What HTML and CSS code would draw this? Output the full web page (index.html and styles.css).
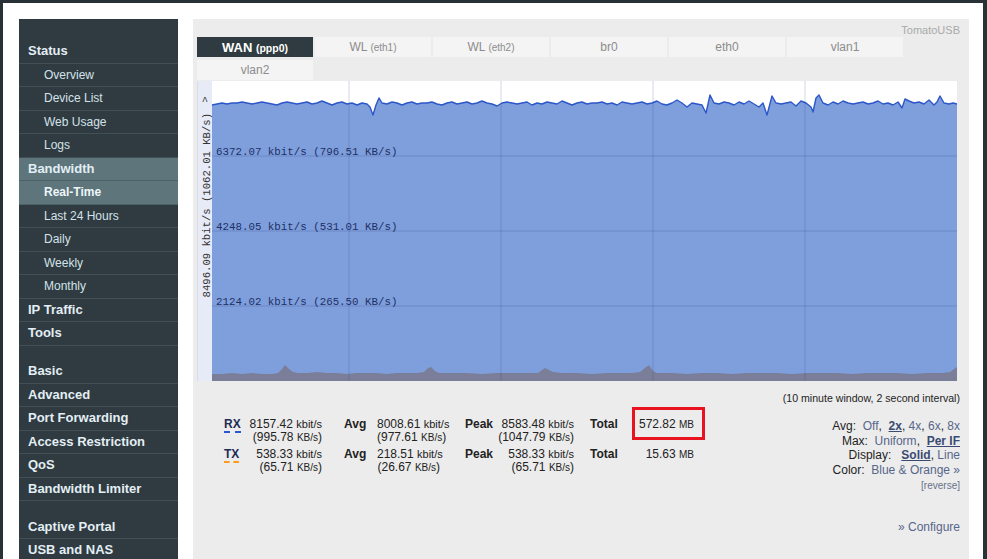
FILE: index.html
```html
<!DOCTYPE html>
<html>
<head>
<meta charset="utf-8">
<title>Bandwidth: Real-Time</title>
<link rel="stylesheet" href="styles.css">
</head>
<body>
<div class="frame">
  <nav class="sidebar">
    <div class="item head">Status</div>
    <div class="item sub">Overview</div>
    <div class="item sub">Device List</div>
    <div class="item sub">Web Usage</div>
    <div class="item sub">Logs</div>
    <div class="item head active">Bandwidth</div>
    <div class="item sub active">Real-Time</div>
    <div class="item sub">Last 24 Hours</div>
    <div class="item sub">Daily</div>
    <div class="item sub">Weekly</div>
    <div class="item sub">Monthly</div>
    <div class="item head">IP Traffic</div>
    <div class="item head">Tools</div>
    <div class="spacer"></div>
    <div class="item head">Basic</div>
    <div class="item head">Advanced</div>
    <div class="item head">Port Forwarding</div>
    <div class="item head">Access Restriction</div>
    <div class="item head">QoS</div>
    <div class="item head">Bandwidth Limiter</div>
    <div class="spacer"></div>
    <div class="item head">Captive Portal</div>
    <div class="item head">USB and NAS</div>
  </nav>
  <main class="panel">
    <div class="brand">TomatoUSB</div>
    <div class="tabs">
      <div class="tab on">WAN <small>(ppp0)</small></div>
      <div class="tab">WL <small>(eth1)</small></div>
      <div class="tab">WL <small>(eth2)</small></div>
      <div class="tab">br0</div>
      <div class="tab">eth0</div>
      <div class="tab">vlan1</div>
      <div class="tab">vlan2</div>
    </div>
    <div class="graph">
      <svg class="chart" width="760" height="300" viewBox="0 0 760 300">
        <rect x="0" y="0" width="15" height="300" fill="#e7ebf7"/>
        <rect x="0" y="0" width="1" height="300" fill="#d9dce4"/>
        <rect x="15" y="0" width="745" height="300" fill="#ffffff"/>
        <g transform="translate(15,0)">
          <path fill="#7f9fdc" d="M0,300 L0,24 5,23 10,22 15,23 20,22 25,22 30,21 35,22 40,23 45,22 50,21 55,22 60,23 65,24 70,22 75,21 80,22 85,23 90,22 95,21 100,23 105,22 110,20 115,22 120,24 125,22 130,21 135,23 140,22 145,24 150,22 155,23 158,26 161,34 164,24 167,17 170,22 175,23 180,21 185,22 190,24 195,22 200,21 205,23 210,22 215,22 220,21 225,23 230,24 235,22 240,21 245,23 250,22 255,21 260,23 265,22 270,20 275,22 280,23 285,25 290,22 295,21 300,22 305,23 310,22 315,21 320,24 325,22 330,23 335,21 340,22 345,23 350,20 355,22 360,24 365,22 370,21 375,23 380,22 385,22 390,21 395,23 400,22 405,24 410,21 415,22 420,23 425,22 430,21 435,23 440,22 445,20 450,23 455,24 460,22 465,19 470,22 475,26 480,22 485,23 490,24 494,32 498,14 502,22 507,23 512,21 517,22 522,24 527,21 532,23 537,20 542,23 547,26 551,22 555,34 560,15 564,22 569,23 574,22 579,21 584,25 589,20 594,22 599,26 601,31 604,17 607,14 611,22 616,24 621,21 626,23 631,20 636,22 641,23 646,22 651,21 656,23 661,22 666,20 671,23 676,22 681,24 686,21 690,27 693,18 697,20 702,22 707,21 712,23 717,19 722,24 725,21 728,15 732,22 737,23 741,22 745,23 L745,300 Z"/>
          <polyline fill="none" stroke="#2b57c9" stroke-width="1.4" stroke-linejoin="round" points="0,24 5,23 10,22 15,23 20,22 25,22 30,21 35,22 40,23 45,22 50,21 55,22 60,23 65,24 70,22 75,21 80,22 85,23 90,22 95,21 100,23 105,22 110,20 115,22 120,24 125,22 130,21 135,23 140,22 145,24 150,22 155,23 158,26 161,34 164,24 167,17 170,22 175,23 180,21 185,22 190,24 195,22 200,21 205,23 210,22 215,22 220,21 225,23 230,24 235,22 240,21 245,23 250,22 255,21 260,23 265,22 270,20 275,22 280,23 285,25 290,22 295,21 300,22 305,23 310,22 315,21 320,24 325,22 330,23 335,21 340,22 345,23 350,20 355,22 360,24 365,22 370,21 375,23 380,22 385,22 390,21 395,23 400,22 405,24 410,21 415,22 420,23 425,22 430,21 435,23 440,22 445,20 450,23 455,24 460,22 465,19 470,22 475,26 480,22 485,23 490,24 494,32 498,14 502,22 507,23 512,21 517,22 522,24 527,21 532,23 537,20 542,23 547,26 551,22 555,34 560,15 564,22 569,23 574,22 579,21 584,25 589,20 594,22 599,26 601,31 604,17 607,14 611,22 616,24 621,21 626,23 631,20 636,22 641,23 646,22 651,21 656,23 661,22 666,20 671,23 676,22 681,24 686,21 690,27 693,18 697,20 702,22 707,21 712,23 717,19 722,24 725,21 728,15 732,22 737,23 741,22 745,23"/>
          <path fill="#7b7e99" d="M0,300 L0,293 10,293 20,292 30,293 40,292 50,293 60,293 66,292 70,288 73,284 77,288 81,291 86,292 95,292 105,291 115,292 125,292 135,293 145,292 155,292 165,292 175,293 185,292 195,292 205,292 212,291 216,287 219,286 223,290 227,292 240,292 255,292 270,293 285,292 300,292 315,292 326,292 330,289 333,287 337,289 341,291 350,292 365,292 380,293 395,292 410,292 420,292 428,291 433,287 437,284 441,290 445,292 460,292 475,293 490,292 505,292 520,293 535,292 550,292 565,292 580,293 595,292 610,292 625,292 640,293 655,292 670,292 685,292 700,293 715,292 730,292 738,291 742,288 745,286 L745,300 Z"/>
          <g class="grid">
            <line x1="137" y1="0" x2="137" y2="300"/>
            <line x1="289" y1="0" x2="289" y2="300"/>
            <line x1="441" y1="0" x2="441" y2="300"/>
            <line x1="593" y1="0" x2="593" y2="300"/>
            <line x1="0" y1="75" x2="745" y2="75"/>
            <line x1="0" y1="150" x2="745" y2="150"/>
            <line x1="0" y1="225" x2="745" y2="225"/>
          </g>
          <text class="lbl" x="4" y="74">6372.07 kbit/s (796.51 KB/s)</text>
          <text class="lbl" x="4" y="149">4248.05 kbit/s (531.01 KB/s)</text>
          <text class="lbl" x="4" y="224">2124.02 kbit/s (265.50 KB/s)</text>
        </g>
        <text class="axis" x="8" y="23" text-anchor="middle">^</text>
        <text class="axis" transform="translate(13,32) rotate(-90)" text-anchor="end">8496.09 kbit/s (1062.01 KB/s)</text>
      </svg>
    </div>
    <div class="note">(10 minute window, 2 second interval)</div>
    <div class="lower">
      <div class="stats">
        <div class="key"><span class="rx">RX</span></div>
        <div class="val">8157.42 <span class="u">kbit/s</span><br>(995.78 <span class="s">KB/s</span>)</div>
        <div class="lab pa">Avg</div>
        <div class="val">8008.61 <span class="u">kbit/s</span><br>(977.61 <span class="s">KB/s</span>)</div>
        <div class="lab pp">Peak</div>
        <div class="val">8583.48 <span class="u">kbit/s</span><br>(1047.79 <span class="s">KB/s</span>)</div>
        <div class="lab pt">Total</div>
        <div class="val"><span class="boxed">572.82 <span class="s">MB</span></span></div>

        <div class="key"><span class="tx">TX</span></div>
        <div class="val">538.33 <span class="u">kbit/s</span><br>(65.71 <span class="s">KB/s</span>)</div>
        <div class="lab pa">Avg</div>
        <div class="val">218.51 <span class="u">kbit/s</span><br>(26.67 <span class="s">KB/s</span>)</div>
        <div class="lab pp">Peak</div>
        <div class="val">538.33 <span class="u">kbit/s</span><br>(65.71 <span class="s">KB/s</span>)</div>
        <div class="lab pt">Total</div>
        <div class="val">15.63 <span class="s">MB</span></div>
      </div>
      <div class="opts">
        <div>Avg:&nbsp; <a>Off</a>,&nbsp; <a class="sel">2x</a>, <a>4x</a>, <a>6x</a>, <a>8x</a></div>
        <div>Max:&nbsp; <a>Uniform</a>,&nbsp; <a class="sel">Per IF</a></div>
        <div>Display:&nbsp;&nbsp; <a class="sel">Solid</a>, <a>Line</a></div>
        <div>Color:&nbsp; <a>Blue &amp; Orange &raquo;</a></div>
        <div class="rev"><a>[reverse]</a></div>
        <div class="cfg"><a>&raquo; Configure</a></div>
      </div>
    </div>
  </main>
</div>
</body>
</html>
```

FILE: styles.css
```css
html, body {
  margin: 0;
  height: 100%;
}
body {
  background: #283236;
  font-family: "Liberation Sans", Arial, sans-serif;
  overflow: hidden;
}
.frame {
  margin: 3px 4px 0 3px;
  height: calc(100vh - 3px);
  box-sizing: border-box;
  background: #fff;
  padding: 16px 0 0 16px;
  display: flex;
  gap: 15px;
}
.sidebar {
  width: 159px;
  flex: none;
  background: #2f3b40;
  padding-top: 21.25px;
  box-sizing: border-box;
}
.item {
  height: 22.5px;
  line-height: 22.5px;
  border-bottom: 1px solid #415055;
  color: #d3e2ea;
  font-size: 12px;
  padding-left: 25px;
  white-space: nowrap;
}
.item.head {
  font-weight: bold;
  font-size: 13px;
  padding-left: 9px;
  color: #e3eef5;
}
.item.active {
  background: #5d757b;
  border-bottom-color: #4c6167;
}
.item.sub.active {
  font-weight: bold;
  color: #eef5f9;
}
.spacer {
  height: 14.5px;
}
.panel {
  width: 776px;
  flex: none;
  background: #ececec;
  padding: 0 9px 0 4px;
  box-sizing: border-box;
}
.brand {
  height: 18px;
  box-sizing: border-box;
  padding-top: 4px;
  line-height: 14px;
  text-align: right;
  font-size: 11px;
  color: #a9a9a9;
}
.tabs {
  width: 710px;
  display: flex;
  flex-wrap: wrap;
  gap: 2.5px 2px;
}
.tab {
  width: 116px;
  height: 20px;
  line-height: 21px;
  text-align: center;
  background: #f4f4f4;
  color: #8c8c8c;
  font-size: 12px;
}
.tab small {
  font-size: 10px;
}
.tab.on {
  background: #2f3b40;
  color: #fff;
  font-weight: bold;
  font-size: 13px;
}
.tab.on small {
  font-size: 10.5px;
}
.graph {
  margin-top: 1.5px;
  width: 760px;
  height: 300px;
}
.chart {
  display: block;
}
.grid line {
  stroke: rgba(40, 60, 120, 0.16);
  stroke-width: 1.3;
}
.lbl {
  font-family: "Liberation Mono", monospace;
  font-size: 10.8px;
  fill: #1d2f66;
}
.axis {
  font-family: "Liberation Mono", monospace;
  font-size: 10.6px;
  fill: #333;
}
.note {
  margin-top: 10px;
  text-align: right;
  font-size: 10.6px;
  line-height: 14px;
  color: #1e1e1e;
}
.lower {
  margin-top: 13px;
  display: flex;
  justify-content: space-between;
  align-items: flex-start;
}
.stats {
  margin-left: 27px;
  display: grid;
  grid-template-columns: 22px 76px 55px 63px 58px 76px 56px 64px;
  row-gap: 4px;
  font-size: 12px;
  line-height: 13px;
  color: #222;
}
.key {
  font-weight: bold;
  color: #1e2b55;
}
.rx, .tx {
  display: inline-block;
  line-height: 12px;
  padding-bottom: 1px;
}
.rx {
  border-bottom: 2px dashed #2a57d0;
}
.tx {
  border-bottom: 2px dashed #ff9a1a;
}
.lab {
  font-weight: bold;
  color: #222;
}
.pa { padding-left: 22px; }
.pp { padding-left: 25px; }
.pt { padding-left: 16px; }
.val {
  text-align: right;
  white-space: nowrap;
}
.u {
  font-size: 11px;
}
.s {
  font-size: 10px;
}
.boxed {
  position: relative;
}
.boxed::after {
  content: "";
  position: absolute;
  left: -7px;
  right: -11px;
  top: -10px;
  bottom: -9px;
  border: 3px solid #e8131f;
}
.opts {
  padding-top: 1px;
  text-align: right;
  font-size: 12px;
  line-height: 14.5px;
  color: #1e1e1e;
}
.opts a {
  color: #57668b;
}
.opts a.sel {
  color: #3b4a72;
  font-weight: bold;
  text-decoration: underline;
}
.rev {
  margin-top: 2px;
  font-size: 10px;
  line-height: 14px;
}
.rev a {
  color: #68718a;
}
.cfg {
  margin-top: 27px;
}
```
